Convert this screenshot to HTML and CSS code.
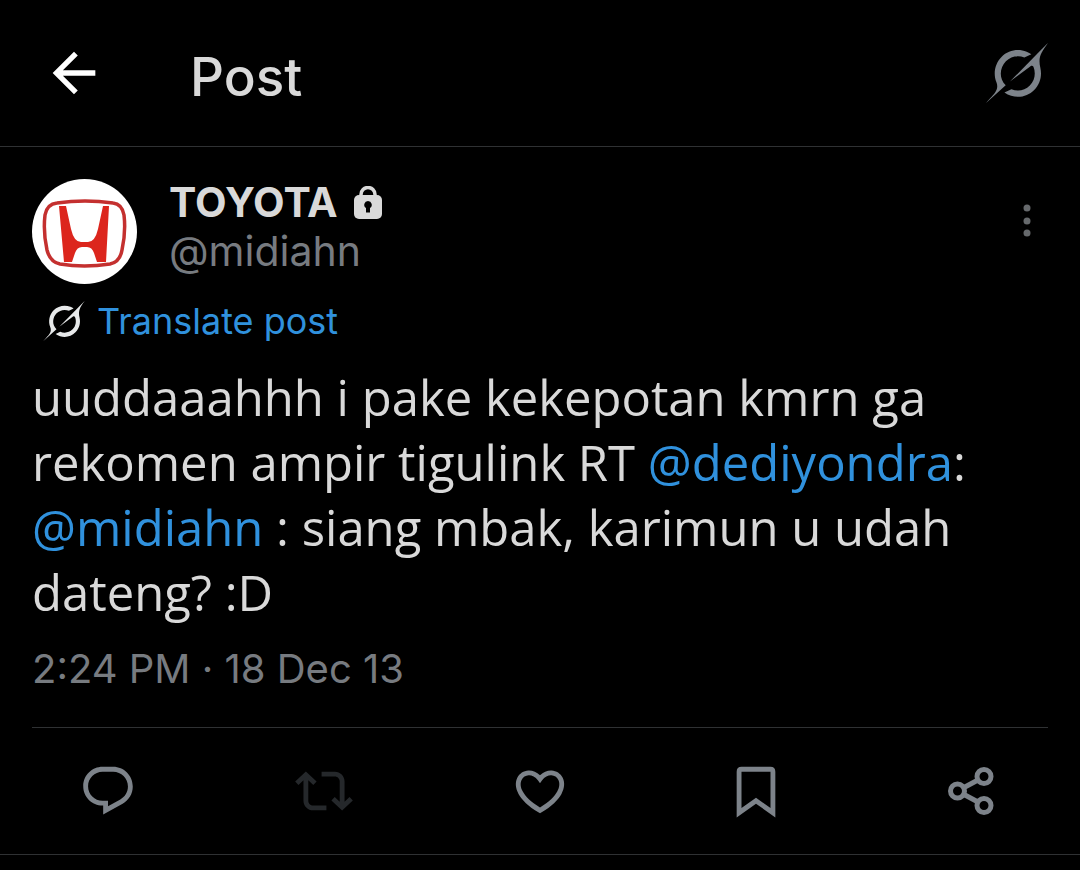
FILE: index.html
```
<!DOCTYPE html>
<html lang="en">
<head>
    <meta charset="UTF-8">
    <meta name="viewport" content="width=device-width, initial-scale=1.0">
    <title>Post</title>
    <link rel="stylesheet" href="styles.css">
</head>
<body>
    <!-- Shared logo shape -->
    <svg class="sprite" aria-hidden="true">
        <symbol id="grok" viewBox="0 0 33 32">
            <path d="M12.745 20.54l10.97-8.19c.539-.4 1.307-.244 1.564.38 1.349 3.288.746 7.241-1.938 9.955-2.683 2.714-6.417 3.31-9.83 1.954l-3.728 1.745c5.347 3.697 11.84 2.782 15.898-1.324 3.219-3.255 4.216-7.692 3.284-11.693l.008.009c-1.351-5.878.332-8.227 3.782-13.031L33 0l-4.54 4.59v-.014L12.743 20.544m-2.263 1.987c-3.837-3.707-3.175-9.446.1-12.755 2.42-2.449 6.388-3.448 9.852-1.979l3.72-1.737c-.67-.49-1.53-1.017-2.515-1.387-4.455-1.854-9.789-.931-13.41 2.728-3.483 3.523-4.579 8.94-2.697 13.561 1.405 3.454-.899 5.898-3.22 8.364C1.49 30.2.666 31.074 0 32l10.478-9.466"/>
        </symbol>
    </svg>

    <header class="top-bar">
        <button class="icon-btn back" aria-label="Back">
            <svg viewBox="0 0 24 24"><path d="M20 11H7.83l5.59-5.59L12 4l-8 8 8 8 1.41-1.41L7.83 13H20v-2z"/></svg>
        </button>
        <h1>Post</h1>
        <button class="icon-btn grok-btn" aria-label="Grok">
            <svg><use href="#grok"/></svg>
        </button>
    </header>

    <main>
        <article class="post">
            <div class="author">
                <svg class="avatar" viewBox="0 0 105 105" role="img" aria-label="TOYOTA">
                    <circle cx="52.5" cy="52.5" r="52.5" fill="#fff"/>
                    <path d="M25 24Q53 20 81 24Q90 25 92 36Q94 53 90 71Q88 83 78 85Q52 89 28 85Q18 83 15 71Q11 53 13 36Q15 25 25 24Z" fill="none" stroke="#c4302f" stroke-width="3.5"/>
                    <path d="M27 27h7l5 23q3 13 10 13h7q7 0 10-13l5-23h6l-3 56h-9l-3-9q-2-6-7-6h-5q-5 0-7 6l-3 9h-8z" fill="#dc261d"/>
                </svg>
                <div class="names">
                    <div class="name">
                        <span>TOYOTA</span>
                        <svg class="lock" viewBox="0 0 28 33" role="img" aria-label="Protected">
                            <path d="M7 12V8.500a7 7 0 0 1 14 0V12" fill="none" stroke="currentColor" stroke-width="3.500"/>
                            <rect y="9" width="28" height="24" rx="5" fill="currentColor"/>
                            <path d="M14 15a3.800 3.800 0 0 1 2 7v4.500h-4V22a3.800 3.800 0 0 1 2-7z" fill="#000"/>
                        </svg>
                    </div>
                    <a class="handle" href="#profile">@midiahn</a>
                </div>
                <button class="icon-btn more" aria-label="More">
                    <svg viewBox="0 0 8 34"><circle cx="4" cy="4" r="3.500"/><circle cx="4" cy="17" r="3.500"/><circle cx="4" cy="29" r="3.500"/></svg>
                </button>
            </div>

            <button class="translate">
                <svg><use href="#grok"/></svg>
                <span>Translate post</span>
            </button>

            <p class="text">uuddaaahhh i pake kekepotan kmrn ga rekomen ampir tigulink RT <a href="#dediyondra">@dediyondra</a>: <a href="#midiahn">@midiahn</a> : siang mbak, karimun u udah dateng? :D</p>

            <time class="date" datetime="2013-12-18T14:24">2:24 PM · 18 Dec 13</time>
        </article>

        <div class="actions">
            <button class="icon-btn" aria-label="Reply">
                <svg viewBox="0 0 24 24"><path d="M1.751 10c0-4.420 3.584-8 8.005-8h4.366c4.490 0 8.129 3.640 8.129 8.130 0 2.960-1.607 5.680-4.196 7.110l-8.054 4.460v-3.690h-.067c-4.490.1-8.183-3.510-8.183-8.010zm8.005-6c-3.317 0-6.005 2.690-6.005 6 0 3.370 2.770 6.080 6.138 6.010l.351-.01h1.761v2.300l5.087-2.810c1.951-1.080 3.163-3.130 3.163-5.360 0-3.390-2.744-6.130-6.129-6.130H9.756z"/></svg>
            </button>
            <button class="icon-btn" aria-label="Repost" disabled>
                <svg viewBox="0 0 24 24"><path d="M4.500 3.880l4.432 4.140-1.364 1.460L5.500 7.550V16c0 1.100.896 2 2 2H13v2H7.500c-2.209 0-4-1.790-4-4V7.550L1.432 9.480.068 8.020 4.500 3.880zM16.500 6H11V4h5.500c2.209 0 4 1.790 4 4v8.450l2.068-1.930 1.364 1.460-4.432 4.140-4.432-4.140 1.364-1.460 2.068 1.930V8c0-1.100-.896-2-2-2z"/></svg>
            </button>
            <button class="icon-btn" aria-label="Like">
                <svg viewBox="0 0 24 24"><path d="M16.697 5.500c-1.222-.06-2.679.51-3.890 2.160l-.805 1.090-.806-1.090C9.984 6.010 8.526 5.440 7.304 5.500c-1.243.07-2.349.78-2.910 1.910-.552 1.120-.633 2.780.479 4.820 1.074 1.970 3.257 4.270 7.129 6.610 3.870-2.340 6.052-4.640 7.126-6.610 1.111-2.040 1.030-3.700.477-4.820-.561-1.130-1.666-1.840-2.908-1.910zm4.187 7.690c-1.351 2.480-4.001 5.120-8.379 7.670l-.503.3-.504-.3c-4.379-2.550-7.029-5.190-8.382-7.670-1.360-2.500-1.410-4.860-.514-6.670.887-1.790 2.647-2.910 4.601-3.010 1.651-.09 3.368.56 4.798 2.010 1.429-1.450 3.146-2.100 4.796-2.010 1.954.1 3.714 1.220 4.601 3.010.896 1.810.846 4.170-.514 6.670z"/></svg>
            </button>
            <button class="icon-btn" aria-label="Bookmark">
                <svg viewBox="0 0 24 24"><path d="M4 4Q4 2 6 2H18Q20 2 20 4V22.940L12 17.230L4 22.940ZM6 4V19.060L12 14.770L18 19.060V4Z" fill-rule="evenodd"/></svg>
            </button>
            <button class="icon-btn" aria-label="Share">
                <svg class="share" viewBox="0 0 58 58"><circle cx="14.500" cy="29" r="7"/><circle cx="41" cy="14.500" r="7"/><circle cx="41" cy="43.500" r="7"/><path d="M21 25.500L35 18M21 32.500L35 40"/></svg>
            </button>
        </div>
    </main>
</body>
</html>
```
FILE: styles.css
```
:root {
    --bg-color: #000;
    --text-color: #d9d9d9;
    --muted: #777b80;
    --icon: #7d838a;
    --link: #3091dd;
    --line: #2f3133;
}

* {
    margin: 0;
    padding: 0;
    box-sizing: border-box;
}

body {
    font-family: Inter, "Liberation Sans", sans-serif;
    background-color: var(--bg-color);
    color: var(--text-color);
    min-height: 100vh;
}

button {
    background: none;
    border: none;
    font: inherit;
    color: inherit;
    cursor: pointer;
}

a {
    color: var(--link);
    text-decoration: none;
}

svg {
    display: block;
    fill: currentColor;
}

.sprite {
    position: absolute;
    width: 0;
    height: 0;
}

.icon-btn {
    display: flex;
    align-items: center;
    justify-content: center;
    color: var(--icon);
}

/* Header */
.top-bar {
    display: flex;
    align-items: center;
    height: 147px;
    padding: 0 32px 0 42px;
    border-bottom: 1px solid var(--line);
}

.top-bar h1 {
    flex: 1;
    padding: 8px 0 0 84px;
    font-size: 53px;
    font-weight: 500;
    line-height: 64px;
}

.back {
    color: #fff;
}

.back svg {
    width: 64px;
    height: 64px;
}

.grok-btn svg {
    width: 62px;
    height: 60px;
}

/* Post */
.post {
    margin: 0 32px;
    padding: 32px 0;
    border-bottom: 1px solid var(--line);
}

.author {
    display: flex;
    gap: 32px;
}

.avatar {
    width: 105px;
    height: 105px;
}

.names {
    flex: 1;
}

.name {
    display: flex;
    align-items: center;
    gap: 16px;
    font-size: 41px;
    font-weight: 700;
    line-height: 46px;
}

.lock {
    width: 28px;
    height: 33px;
}

.handle {
    display: block;
    color: var(--muted);
    font-size: 41px;
    line-height: 52px;
}

.more {
    width: 42px;
    height: 84px;
    color: #66696c;
}

.more svg {
    width: 8px;
    height: 34px;
}

.translate {
    display: flex;
    align-items: center;
    gap: 12px;
    margin-top: 11px;
    padding-left: 11px;
    color: var(--link);
    font-size: 36px;
    line-height: 52px;
}

.translate svg {
    width: 42px;
    height: 40px;
    color: #e7e9ea;
}

.text {
    margin-top: 18px;
    font-family: "Open Sans", "Liberation Sans", sans-serif;
    font-size: 49px;
    line-height: 65px;
}

.date {
    display: block;
    margin-top: 18px;
    color: var(--muted);
    font-size: 40px;
    line-height: 52px;
}

/* Actions */
.actions {
    display: grid;
    grid-template-columns: repeat(5, 1fr);
    padding: 34px 0;
    border-bottom: 1px solid var(--line);
}

.actions svg {
    width: 58px;
    height: 58px;
}

.actions .share {
    fill: none;
    stroke: currentColor;
    stroke-width: 5px;
}

.actions button:disabled {
    color: #25282b;
    cursor: default;
}
```
